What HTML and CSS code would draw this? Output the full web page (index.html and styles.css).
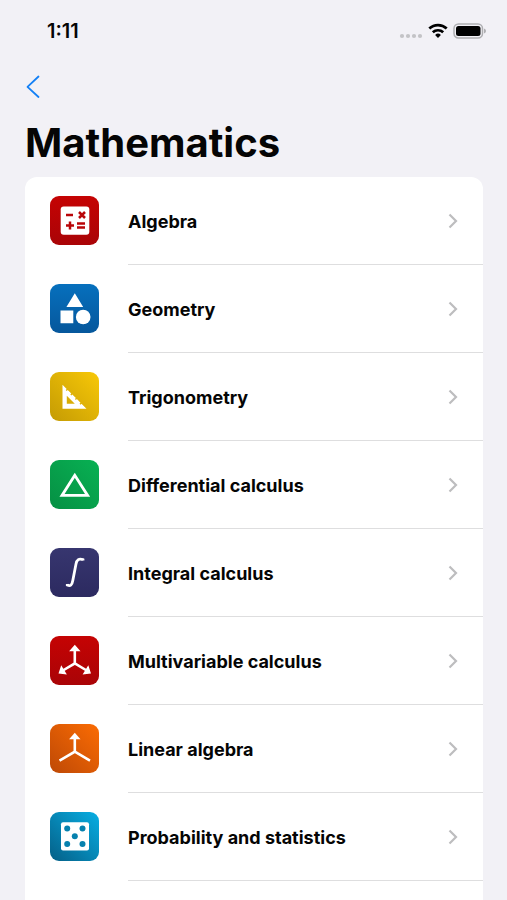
FILE: index.html
```html
<!DOCTYPE html>
<html lang="en">
<head>
<meta charset="utf-8">
<meta name="viewport" content="width=device-width, initial-scale=1">
<title>Mathematics</title>
<link rel="stylesheet" href="styles.css">
</head>
<body>
<div class="screen">
  <header class="status">
    <time class="clock">1:11</time>
    <div class="indicators">
      <svg width="24" height="20" viewBox="0 0 24 20" fill="#c3c3c6" aria-hidden="true"><circle cx="3" cy="15" r="2.1"/><circle cx="9" cy="15" r="2.1"/><circle cx="15" cy="15" r="2.1"/><circle cx="21" cy="15" r="2.1"/></svg>
      <svg width="20" height="20" viewBox="0 0 20 20" fill="none" stroke="#000" stroke-width="2.7" aria-hidden="true"><path d="M1.3 7.6a12.6 12.6 0 0 1 17.4 0"/><path d="M4.8 11.3a7.6 7.6 0 0 1 10.4 0"/><path d="M10 17l-2.900-3.100a4.300 4.300 0 0 1 5.800 0z" fill="#000" stroke="none"/></svg>
      <svg width="34" height="20" viewBox="0 0 34 20" aria-hidden="true"><rect x="1" y="3" width="28.500" height="14" rx="4.500" fill="#f2f1f6" stroke="#aeaeb1" stroke-width="1.500"/><rect x="3" y="5" width="24.500" height="10" rx="2.500"/><path d="M31 7.500q2 .8 2 2.500t-2 2.500z" fill="#aeaeb1"/></svg>
    </div>
  </header>
  <nav class="nav">
    <button class="back" type="button" aria-label="Back"><svg width="16" height="24" viewBox="0 0 16 24" fill="none" stroke="#1480f5" stroke-width="1.8" stroke-linecap="round" stroke-linejoin="round"><path d="M13.500 1.500L2.500 11.800L13.500 22"/></svg></button>
  </nav>
  <main>
    <h1>Mathematics</h1>
    <ul class="card">
      <li><a class="row" href="#algebra">
        <svg class="icon algebra" viewBox="0 0 49 49" fill="#fff"><rect x="10.700" y="10.400" width="28.600" height="28.400" rx="3"/><path d="M16 19h7M29 16l6 6M35 16l-6 6M16 29.500h8M20 25.500v8M27 27.500h8M27 31.500h8" stroke="#b90508" stroke-width="2.500"/></svg>
        <span class="label">Algebra</span><svg class="chevron" viewBox="0 0 10 16"><path d="M1.500 1.500L8 8l-6.500 6.500"/></svg></a></li>
      <li><a class="row" href="#geometry">
        <svg class="icon geometry" viewBox="0 0 49 49" fill="#fff"><path d="M24.800 9.300L33.200 23H16.400zM10.500 26.500h12.800v12.800H10.500z"/><circle cx="33.200" cy="33" r="7.300"/></svg>
        <span class="label">Geometry</span><svg class="chevron" viewBox="0 0 10 16"><path d="M1.500 1.500L8 8l-6.500 6.500"/></svg></a></li>
      <li><a class="row" href="#trigonometry">
        <svg class="icon trigonometry" viewBox="0 0 49 49" fill="#fff"><path fill-rule="evenodd" d="M12.500 12.700l4.200 4.200-1 1 1 1 1-1 3.600 3.600-1 1 1 1 1-1 3.600 3.600-1 1 1 1 1-1 3.600 3.600-1 1 1 1 1-1 5 5h-24zM16.800 23.700v8h8z"/></svg>
        <span class="label">Trigonometry</span><svg class="chevron" viewBox="0 0 10 16"><path d="M1.500 1.500L8 8l-6.500 6.500"/></svg></a></li>
      <li><a class="row" href="#differential">
        <svg class="icon differential" viewBox="0 0 49 49" fill="none" stroke="#fff" stroke-width="2.800"><path d="M24.800 15.300L12 35.400h25.600z"/></svg>
        <span class="label">Differential calculus</span><svg class="chevron" viewBox="0 0 10 16"><path d="M1.500 1.500L8 8l-6.500 6.500"/></svg></a></li>
      <li><a class="row" href="#integral">
        <svg class="icon integral" viewBox="0 0 49 49" fill="none" stroke="#fff" stroke-width="2.800"><path d="M33 12.600v-1c-4-1.500-6.200.2-7 4.400l-3.200 16.500c-.8 4.500-2.300 6-5.500 4.500v-1"/></svg>
        <span class="label">Integral calculus</span><svg class="chevron" viewBox="0 0 10 16"><path d="M1.500 1.500L8 8l-6.500 6.500"/></svg></a></li>
      <li><a class="row" href="#multivariable">
        <svg class="icon multivariable" viewBox="0 0 49 49" fill="#fff"><path d="M24.800 13v14.400L12 35M24.800 27.400L37.500 35" fill="none" stroke="#fff" stroke-width="2.600"/><path d="M24.800 8.800l5.700 6.400H19.100zM8.500 37.600l2.700-8.400 5.700 9.400zM41 37.600l-2.700-8.400-5.700 9.400z"/></svg>
        <span class="label">Multivariable calculus</span><svg class="chevron" viewBox="0 0 10 16"><path d="M1.500 1.500L8 8l-6.500 6.500"/></svg></a></li>
      <li><a class="row" href="#linear">
        <svg class="icon linear" viewBox="0 0 49 49" fill="#fff"><path d="M24.800 13v14.700L9.500 36.700M24.800 27.700L40 36.700" fill="none" stroke="#fff" stroke-width="2.600"/><path d="M24.800 8.800l5.700 6.400H19.100z"/></svg>
        <span class="label">Linear algebra</span><svg class="chevron" viewBox="0 0 10 16"><path d="M1.500 1.500L8 8l-6.500 6.500"/></svg></a></li>
      <li><a class="row" href="#probability">
        <svg class="icon probability" viewBox="0 0 49 49" fill="#fff"><rect x="11" y="10.300" width="28" height="28.200" rx="2"/><g fill="#0681ae"><circle cx="17.200" cy="16.400" r="3"/><circle cx="32.500" cy="16.400" r="3"/><circle cx="24.800" cy="24.200" r="3"/><circle cx="17.200" cy="31.900" r="3"/><circle cx="32.500" cy="31.900" r="3"/></g></svg>
        <span class="label">Probability and statistics</span><svg class="chevron" viewBox="0 0 10 16"><path d="M1.500 1.500L8 8l-6.500 6.500"/></svg></a></li>
      <li class="row"><span class="icon upcoming"></span></li>
    </ul>
  </main>
</div>
</body>
</html>
```
FILE: styles.css
```css
* { box-sizing: border-box; }
body {
  margin: 0;
  background: #f2f1f6;
  color: #050505;
  font-family: Inter, "Liberation Sans", sans-serif;
}
.screen {
  height: 100vh;
  overflow-y: auto;
  scrollbar-width: none;
}
.status {
  display: flex;
  align-items: center;
  justify-content: space-between;
  height: 62px;
  padding: 0 20px 0 47px;
}
.clock { font-size: 20px; font-weight: 600; }
.indicators { display: flex; align-items: center; gap: 5px; }
.indicators svg { display: block; }
.nav { display: flex; align-items: center; height: 50px; padding: 0 25px; }
.back {
  display: flex;
  padding: 0;
  border: 0;
  background: none;
  cursor: pointer;
}
main { padding: 0 24px 24px 25px; }
h1 {
  margin: 0;
  padding-bottom: 3px;
  font-size: 40px;
  font-weight: 700;
  line-height: 62px;
}
.card {
  margin: 0;
  padding: 0;
  list-style: none;
  background: #fff;
  border-radius: 12px;
}
.row {
  position: relative;
  display: flex;
  align-items: center;
  height: 88px;
  padding: 0 25px;
  color: inherit;
  text-decoration: none;
}
a.row::after {
  content: "";
  position: absolute;
  right: 0;
  bottom: 0;
  left: 103px;
  height: 1px;
  background: #dededf;
}
.icon {
  flex: none;
  width: 49px;
  height: 49px;
  margin: 0 29px 1px 0;
  border-radius: 9px;
}
.label { flex: 1; padding-top: 1px; font-size: 18px; font-weight: 700; line-height: 24px; }
.chevron {
  width: 10px;
  height: 16px;
  fill: none;
  stroke: #bdbdbf;
  stroke-width: 2.2;
}
.algebra, .multivariable { background: linear-gradient(to bottom, #c50303, #a90407); }
.geometry { background: linear-gradient(to bottom, #0670bd, #06579c); }
.trigonometry { background: linear-gradient(to bottom left, #f8c807, #c49b04); }
.differential { background: linear-gradient(to bottom left, #08b153, #069044); }
.integral { background: linear-gradient(to bottom, #37366f, #2c2a60); }
.linear { background: linear-gradient(to bottom left, #fb6c03, #be4906); }
.probability { background: linear-gradient(to bottom left, #07aee3, #055f87); }
.upcoming { background: #8e8e93; }
```
